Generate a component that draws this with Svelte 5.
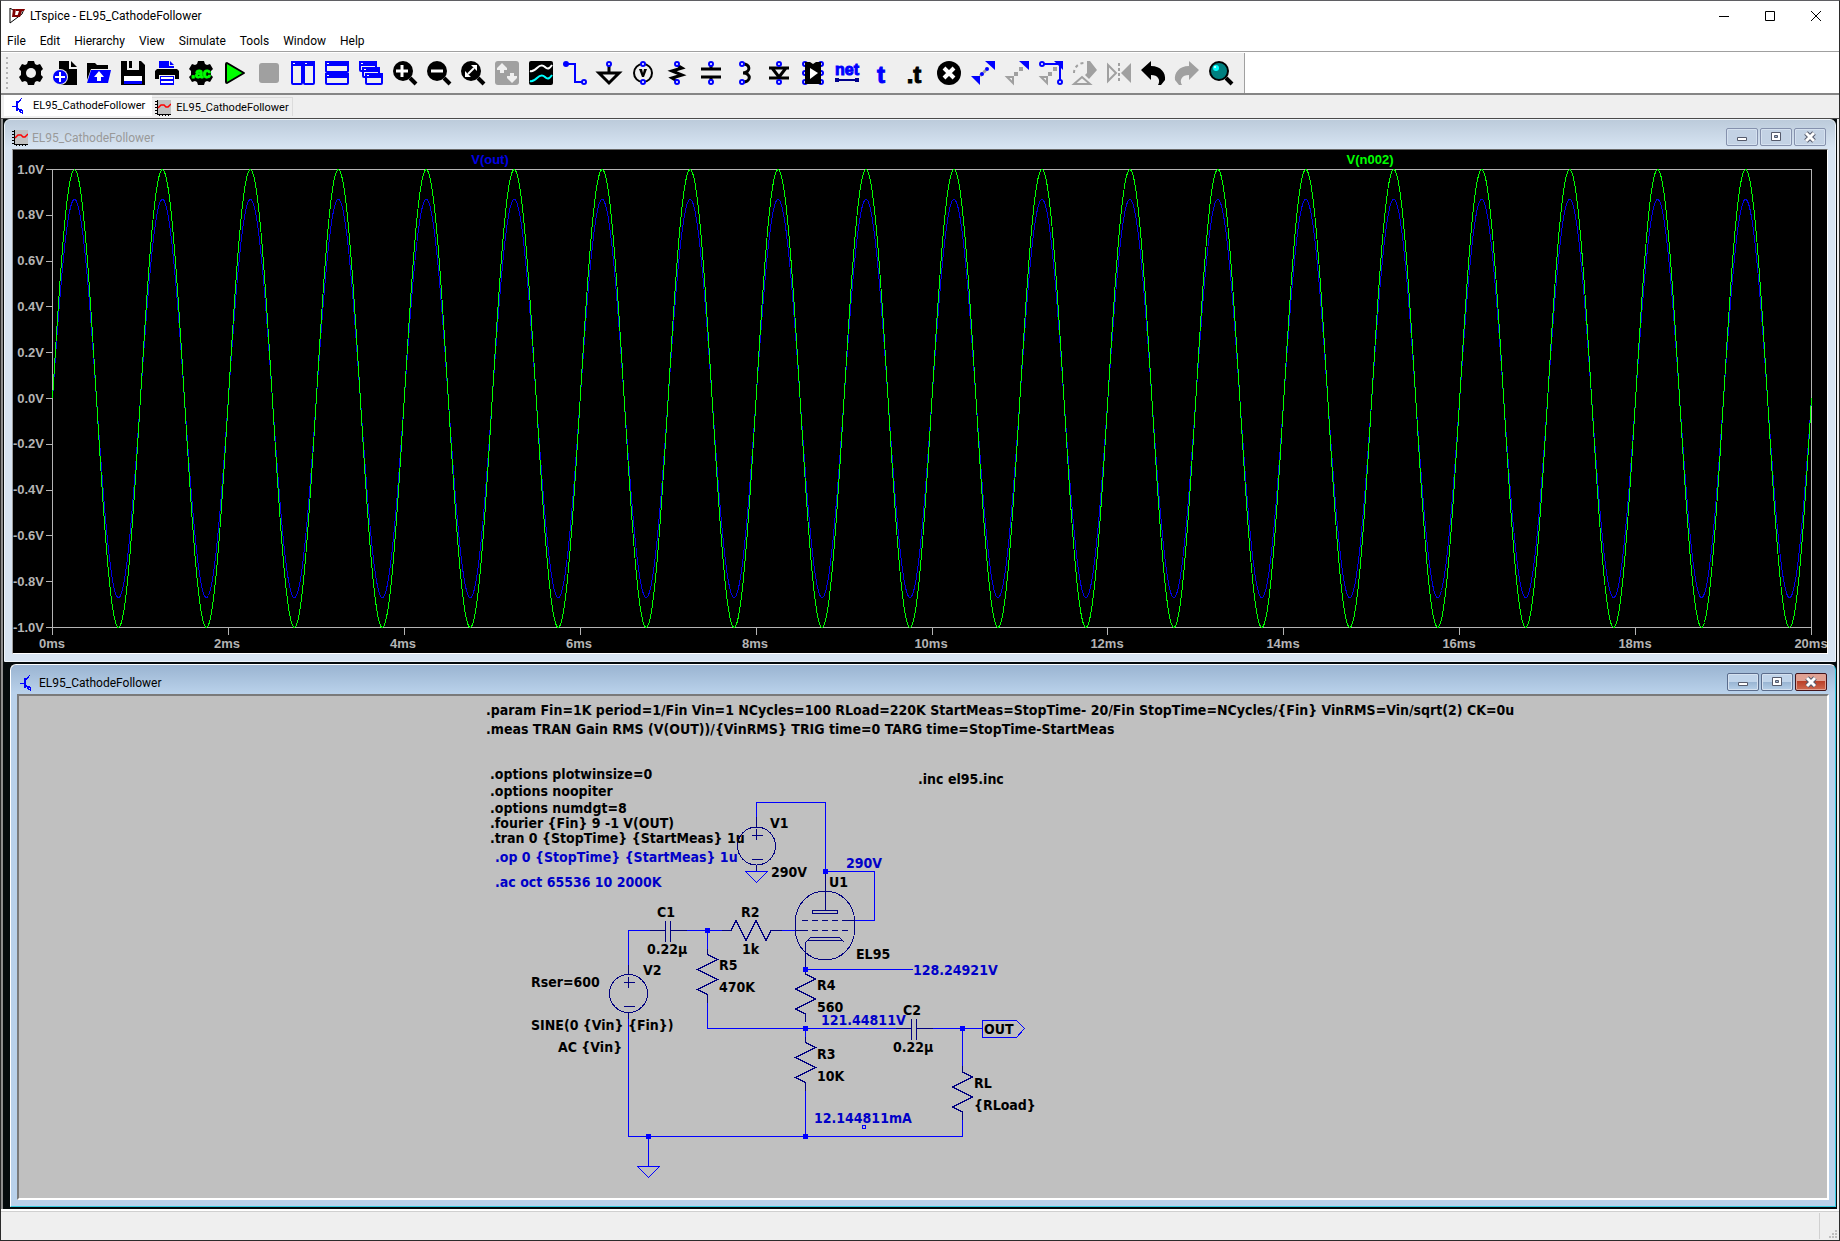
<script lang="ts">
	type Tool = { name: string; art: string }
	type Label = { x: number; y: number; text: string; blue?: boolean }

	const title = 'EL95_CathodeFollower'
	const menus = ['File', 'Edit', 'Hierarchy', 'View', 'Simulate', 'Tools', 'Window', 'Help']

	const gear =
		'<path d="M9 0h6l1 3 2 1 3-1 3 5-2 2v4l2 2-3 5-3-1-2 1-1 3H9l-1-3-2-1-3 1-3-5 2-2v-4L0 8l3-5 3 1 2-1z"/>'
	const lens =
		'<path d="M17 17l6 6" stroke="#000" stroke-width="4"/><circle cx="10" cy="10" r="10"/>'
	const pin = (x: number, y: number) =>
		`<circle cx="${x}" cy="${y}" r="2" fill="#fff" stroke="#00f" stroke-width="2"/>`
	const pane = (x: number, y: number, w: number, h: number) =>
		`<rect x="${x + 1}" y="${y + 1}" width="${w - 2}" height="${h - 2}" rx="1" fill="#efefef" stroke="#00f" stroke-width="2"/><path d="M${x} ${y}h${w}v5h-${w}z" fill="#00f"/><path d="M${x + 2} ${y + 2}h2v1h-2z" fill="#fff"/>`

	const tools: Tool[] = [
		{ name: 'Settings', art: gear + '<circle cx="12" cy="12" r="5" fill="#efefef"/>' },
		{
			name: 'New schematic',
			art: '<path d="M6 0h10v8h8v16H6z"/><path d="M18 0l6 6h-6z"/><circle cx="7" cy="16" r="8" fill="#efefef"/><circle cx="7" cy="16" r="7" fill="#00f"/><path d="M7 11v10M2 16h10" stroke="#fff" stroke-width="2"/>'
		},
		{
			name: 'Open',
			art: '<path d="M0 2h8l2 2h11v4H4L0 19z"/><path d="M4 9h20l-3 13H0z" fill="#00f"/><path d="M12 10l5 6h-3v4h-4v-4H7z" fill="#fff"/>'
		},
		{
			name: 'Save',
			art: '<path d="M0 0h20l4 4v20H0z"/><path d="M6 0h12v9H6z" fill="#efefef"/><path d="M8 0h3v7H8z"/><path d="M3 15h18v6H3z" fill="#fff"/><path d="M3 20h18v3H3z" fill="#00f"/>'
		},
		{
			name: 'Print',
			art: '<path d="M4 0h10v5h5v2H4z" fill="#00f"/><path d="M15 0l4 4h-4z" fill="#00f"/><path d="M2 8h20l2 2v8h-4v-4H4v4H0v-8z"/><path d="M5 15h14v9H5z" fill="#00f"/><path d="M6 17h12M6 21h12" stroke="#fff" stroke-width="2"/>'
		},
		{
			name: 'Configure analysis',
			art:
				gear +
				'<text x="12" y="17" text-anchor="middle" font-family="Liberation Sans, sans-serif" font-weight="700" font-size="14" fill="#0f0" stroke="#0f0">.ac</text>'
		},
		{
			name: 'Run',
			art: '<path d="M3 3v18q0 1 1 1L21 12 4 2q-1 0-1 1z" fill="#0f0" stroke="#000" stroke-width="2" stroke-linejoin="round"/>'
		},
		{ name: 'Stop', art: '<rect x="2" y="2" width="20" height="20" rx="3" fill="#a0a0a0"/>' },
		{ name: 'Tile vertically', art: pane(0, 0, 12, 24) + pane(12, 0, 12, 24) },
		{ name: 'Tile horizontally', art: pane(0, 0, 24, 12) + pane(0, 12, 24, 12) },
		{ name: 'Cascade', art: pane(0, 0, 18, 11) + pane(3, 6, 18, 11) + pane(6, 12, 18, 12) },
		{ name: 'Zoom in', art: lens + '<path d="M9 4v12M3 10h12" stroke="#fff" stroke-width="3"/>' },
		{ name: 'Zoom out', art: lens + '<path d="M4 10h12" stroke="#fff" stroke-width="3"/>' },
		{
			name: 'Zoom to fit',
			art: lens + '<path d="M7 13l6-6" stroke="#fff" stroke-width="2"/><path d="M10 4h6v6zM4 10l6 6H4z" fill="#fff"/>'
		},
		{
			name: 'Autorange',
			art: '<rect width="24" height="24" rx="3" fill="#a0a0a0"/><path d="M7 2l5 5v2H9v3H5V9H2V7zM17 22l-5-5v-2h3v-3h4v3h3v2z" fill="#efefef"/>'
		},
		{
			name: 'Waveforms',
			art: '<rect width="24" height="24" rx="2"/><path d="M1 10c3 1 5-1 7-3s5-4 8-1 5 1 7-2" fill="none" stroke="#fff" stroke-width="2"/><path d="M1 20c3 1 5-1 7-3s5-4 8-1 5 1 7-2" fill="none" stroke="#0ff" stroke-width="2"/>'
		},
		{
			name: 'Wire',
			art: '<path d="M3 3h9v18h8" fill="none" stroke="#00f" stroke-width="2"/><circle cx="3" cy="3" r="3" fill="#00f"/>' + pin(21, 21)
		},
		{
			name: 'Ground',
			art: '<path d="M12 4v8M2 12h20L12 22z" fill="none" stroke="#000" stroke-width="3"/>' + pin(12, 3)
		},
		{
			name: 'Voltage source',
			art: '<circle cx="12" cy="12" r="9" fill="none" stroke="#000" stroke-width="2"/><path d="M8 8h3l1 4 1-4h3l-3 8h-2z"/>' + pin(12, 3) + pin(12, 21)
		},
		{
			name: 'Resistor',
			art: '<path d="M12 4l5 3-10 3 10 4-10 3 5 3" fill="none" stroke="#000" stroke-width="3"/>' + pin(12, 3) + pin(12, 21)
		},
		{
			name: 'Capacitor',
			art: '<path d="M12 4v4M12 16v4M2 8h20M2 16h20" stroke="#000" stroke-width="3"/>' + pin(12, 3) + pin(12, 21)
		},
		{
			name: 'Inductor',
			art: '<path d="M9 3c9-1 9 9 1 9 9 0 8 10-1 9" fill="none" stroke="#000" stroke-width="3"/>' + pin(9, 3) + pin(9, 21)
		},
		{
			name: 'Diode',
			art: '<path d="M2 7h20M2 17h20M5 7l7 9 7-9" fill="none" stroke="#000" stroke-width="3"/>' + pin(12, 3) + pin(12, 21)
		},
		{
			name: 'Component',
			art:
				[3, 12, 21].map((y) => pin(4, y) + pin(20, y)).join('') +
				'<path d="M4 1h5l3 2 3-2h5v22H4z"/><path d="M9 7l8 5-8 6z" fill="#fff"/>'
		},
		{
			name: 'Net name',
			art: '<text x="12" y="14" text-anchor="middle" font-family="Liberation Sans, sans-serif" font-weight="700" font-size="16" fill="#00f" stroke="#00f">net</text><path d="M2 19h20" stroke="#00008c" stroke-width="2"/><path d="M0 17h4v4H0zM20 17h4v4h-4z" fill="#00008c"/>'
		},
		{
			name: 'Text',
			art: '<text x="12" y="22" text-anchor="middle" font-family="Liberation Sans, sans-serif" font-weight="700" font-size="24" fill="#00f" stroke="#00f">t</text>'
		},
		{
			name: 'SPICE directive',
			art: '<text x="11" y="22" text-anchor="middle" font-family="Liberation Sans, sans-serif" font-weight="700" font-size="24" stroke="#000">.t</text>'
		},
		{
			name: 'Delete',
			art: '<circle cx="12" cy="12" r="12"/><path d="M7 7l10 10M17 7L7 17" stroke="#fff" stroke-width="4"/>'
		},
		{
			name: 'Move',
			art: '<path d="M14 0h10v9zM0 15l9 9v-9z" fill="#00f"/><path d="M9 15l6-6" stroke="#a0a0a0" stroke-width="3" stroke-dasharray="3 2"/><circle cx="11" cy="13" r="2" fill="#00f"/><circle cx="16" cy="8" r="2" fill="#00f"/>'
		},
		{
			name: 'Duplicate',
			art: '<path d="M14 0h10v9z" fill="#00f"/><path d="M2 16h6v6z" fill="none" stroke="#a0a0a0" stroke-width="2"/><path d="M9 11h4v4H9zM14 6h4v4h-4z" fill="#a0a0a0"/>'
		},
		{
			name: 'Drag',
			art: '<path d="M2 16h6v6z" fill="none" stroke="#a0a0a0" stroke-width="2"/><path d="M9 11h4v4H9zM14 6h4v4h-4z" fill="#a0a0a0"/><path d="M3 3h18v18" fill="none" stroke="#00f" stroke-width="2"/><path d="M15 0h9v9z" fill="#00f"/>' + pin(3, 3) + pin(21, 21)
		},
		{
			name: 'Rotate',
			art: '<path d="M1 12a10 10 0 0 1 11-10" fill="none" stroke="#a0a0a0" stroke-width="2" stroke-dasharray="3 3"/><path d="M14 0h3l7 9-8 9-4-4 2-2z" fill="#a0a0a0"/><path d="M1 23l8-7 8 7z" fill="none" stroke="#a0a0a0" stroke-width="2"/>'
		},
		{
			name: 'Mirror',
			art: '<path d="M12 2v20" stroke="#a0a0a0" stroke-width="2" stroke-dasharray="3 2"/><path d="M1 4l8 8-8 8z" fill="none" stroke="#a0a0a0" stroke-width="2"/><path d="M24 2v20L14 12z" fill="#a0a0a0"/>'
		},
		{
			name: 'Undo',
			art: '<path d="M0 9L10 0v5c10 0 15 7 14 14l-4 5h-3c3-5 0-10-7-10v5z"/>'
		},
		{
			name: 'Redo',
			art: '<path d="M24 9L14 0v5C4 5-1 12 0 19l4 5h3c-3-5 0-10 7-10v5z" fill="#a0a0a0"/>'
		},
		{
			name: 'Search',
			art: '<path d="M17 17l6 6" stroke="#000" stroke-width="4"/><circle cx="10" cy="10" r="9" fill="#008080" stroke="#000" stroke-width="2"/><circle cx="7" cy="7" r="3" fill="#0ff"/><circle cx="6" cy="6" r="1" fill="#fff"/>'
		}
	]

	// plot area in pane coordinates
	const left = 52.5
	const top = 169.5
	const width = 1759
	const height = 458
	const cycles = 20

	const volts = [1, 0.8, 0.6, 0.4, 0.2, 0, -0.2, -0.4, -0.6, -0.8, -1]
	const times = [0, 2, 4, 6, 8, 10, 12, 14, 16, 18, 20]
	const yOf = (v: number) => top + (height / 2) * (1 - v)
	const xOf = (ms: number) => left + (width * ms) / 20

	function trace(amplitude: number) {
		const points: string[] = []
		for (let i = 0; i <= width; i++) {
			const v = amplitude * Math.sin((2 * Math.PI * cycles * i) / width)
			points.push(`${left + i},${yOf(v).toFixed(1)}`)
		}
		return points.join(' ')
	}

	const labels: Label[] = [
		{
			x: 486,
			y: 715,
			text: '.param Fin=1K period=1/Fin Vin=1 NCycles=100 RLoad=220K StartMeas=StopTime- 20/Fin StopTime=NCycles/{Fin} VinRMS=Vin/sqrt(2) CK=0u'
		},
		{ x: 486, y: 734, text: '.meas TRAN Gain RMS (V(OUT))/{VinRMS} TRIG time=0 TARG time=StopTime-StartMeas' },
		{ x: 490, y: 779, text: '.options plotwinsize=0' },
		{ x: 490, y: 796, text: '.options noopiter' },
		{ x: 490, y: 813, text: '.options numdgt=8' },
		{ x: 490, y: 828, text: '.fourier {Fin} 9 -1 V(OUT)' },
		{ x: 490, y: 843, text: '.tran 0 {StopTime} {StartMeas} 1u' },
		{ x: 495, y: 862, text: '.op 0 {StopTime} {StartMeas} 1u', blue: true },
		{ x: 495, y: 887, text: '.ac oct 65536 10 2000K', blue: true },
		{ x: 918, y: 784, text: '.inc el95.inc' },
		{ x: 770, y: 828, text: 'V1' },
		{ x: 771, y: 877, text: '290V' },
		{ x: 846, y: 868, text: '290V', blue: true },
		{ x: 829, y: 887, text: 'U1' },
		{ x: 657, y: 917, text: 'C1' },
		{ x: 741, y: 917, text: 'R2' },
		{ x: 647, y: 954, text: '0.22µ' },
		{ x: 742, y: 954, text: '1k' },
		{ x: 643, y: 975, text: 'V2' },
		{ x: 719, y: 970, text: 'R5' },
		{ x: 719, y: 992, text: '470K' },
		{ x: 856, y: 959, text: 'EL95' },
		{ x: 913, y: 975, text: '128.24921V', blue: true },
		{ x: 531, y: 987, text: 'Rser=600' },
		{ x: 817, y: 990, text: 'R4' },
		{ x: 817, y: 1012, text: '560' },
		{ x: 821, y: 1025, text: '121.44811V', blue: true },
		{ x: 903, y: 1015, text: 'C2' },
		{ x: 893, y: 1052, text: '0.22µ' },
		{ x: 984, y: 1034, text: 'OUT' },
		{ x: 531, y: 1030, text: 'SINE(0 {Vin} {Fin})' },
		{ x: 558, y: 1052, text: 'AC {Vin}' },
		{ x: 817, y: 1059, text: 'R3' },
		{ x: 817, y: 1081, text: '10K' },
		{ x: 974, y: 1088, text: 'RL' },
		{ x: 974, y: 1110, text: '{RLoad}' },
		{ x: 814, y: 1123, text: '12.144811mA', blue: true }
	]

	const wires = [
		'M756.5 826V802.5H825.5V872',
		'M825.5 871.5H874.5V920.5H855',
		'M756.5 871.5m-11 0h22l-11 11z',
		'M628.5 966V930.5H650M684 930.5H722M707.5 930.5V950M782 930.5H795',
		'M805.5 969.5H913M707.5 1002V1028.5H896M930 1028.5H982',
		'M962.5 1028.5V1066M962.5 1118V1136.5H628.5V1018',
		'M805.5 1028.5V1038M805.5 1088V1136.5M648.5 1136.5V1166',
		'M637.5 1166.5h22l-11 11z',
		'M982.5 1020.5H1016.5L1024.5 1028.5L1016.5 1037.5H982.5Z',
		'M862.5 1125.5h3v3h-3z'
	]
	const nodes = [
		[825, 871],
		[707, 930],
		[805, 969],
		[805, 1028],
		[962, 1028],
		[648, 1136],
		[805, 1136]
	]
	const resistors = [
		[707.5, 954.5],
		[805.5, 974],
		[805.5, 1042.5],
		[962.5, 1072]
	]
	const sources = [
		[756.5, 846],
		[628.5, 993.5]
	]
	const capacitors = [
		[667.5, 930.5],
		[913.5, 1028.5]
	]
</script>

{#snippet transistor()}
	<svg class="doc-icon" viewBox="0 0 16 16" shape-rendering="crispEdges" aria-hidden="true">
		<path d="M0 8h4M5 6l5-6M5 10l6 6" stroke="#00f" fill="none" />
		<path d="M4 3h2v10H4zM6 10l5 2-3 3zM9 13l2 3V13z" fill="#00f" />
	</svg>
{/snippet}

{#snippet graph()}
	<svg class="doc-icon" viewBox="0 0 16 16" aria-hidden="true">
		<path d="M2 0h14v14H2z" fill="#c0c0c0" />
		<path
			d="M2 0v14h14M0 1h2M0 4h2M0 7h2M0 10h2M0 13h2M4 14v2M7 14v2M10 14v2M13 14v2"
			stroke="#000"
			fill="none"
			shape-rendering="crispEdges"
		/>
		<path d="M3 8l3-3h3l2 2h2l3-3" stroke="#f00" stroke-width="1.5" fill="none" />
	</svg>
{/snippet}

{#snippet windowButtons()}
	<div class="controls">
		<button aria-label="Minimize">
			<svg viewBox="0 0 16 12"><path d="M3.5 6.500h9v3h-9z" fill="#fff" stroke="#555a6b" /></svg>
		</button>
		<button aria-label="Maximize">
			<svg viewBox="0 0 16 12">
				<path d="M3.500 1.500h9v8h-9z" fill="#fff" stroke="#555a6b" />
				<path d="M6.500 4.500h3v2h-3z" fill="#9fb4cf" stroke="#555a6b" />
			</svg>
		</button>
		<button class="close" aria-label="Close">
			<svg viewBox="0 0 16 12">
				<path d="M4 2l8 8M12 2l-8 8" stroke="#555a6b" stroke-width="5" />
				<path d="M4 2l8 8M12 2l-8 8" stroke="#fff" stroke-width="3" />
			</svg>
		</button>
	</div>
{/snippet}

<div class="app">
	<header class="titlebar">
		<svg class="logo" viewBox="0 0 16 16" aria-hidden="true">
			<path d="M4 2L1 0v15l12-9 2-5" fill="none" stroke="#000" />
			<path d="M4 1h3L6 7h3l-1 2H3zM7 1h9l-1 2h-2l-2 6H8l2-6H7z" fill="#800000" />
		</svg>
		<h1>LTspice - {title}</h1>
		<div class="caption">
			<button aria-label="Minimize"><svg viewBox="0 0 10 10"><path d="M0 5.5h10" /></svg></button>
			<button aria-label="Maximize"><svg viewBox="0 0 10 10"><path d="M.5.5h9v9h-9z" /></svg></button>
			<button aria-label="Close"><svg viewBox="0 0 10 10"><path d="M0 0l10 10M10 0L0 10" /></svg></button>
		</div>
	</header>

	<nav class="menu">
		{#each menus as menu}
			<button>{menu}</button>
		{/each}
	</nav>

	<div class="toolrow">
		<div class="toolbar" role="toolbar" aria-label="Main toolbar">
			<span class="grip"></span>
			{#each tools as tool}
				<button aria-label={tool.name}>
					<svg viewBox="0 0 24 24">{@html tool.art}</svg>
				</button>
			{/each}
		</div>
	</div>

	<div class="tabs" role="tablist">
		<button class="tab active" role="tab" aria-selected="true">{@render transistor()}{title}</button>
		<button class="tab" role="tab" aria-selected="false">{@render graph()}{title}</button>
	</div>

	<main class="mdi">
		<section class="window">
			<header>
				{@render graph()}
				<h2>{title}</h2>
				{@render windowButtons()}
			</header>
			<svg class="plot" viewBox="13 150 1814 503" role="img" aria-label="Transient waveforms">
				<g class="axis">
					<rect x={left} y={top} {width} {height} />
					{#each volts as v}
						<path d="M{left} {yOf(v)}h-7" />
					{/each}
					{#each times as t}
						<path d="M{xOf(t)} {top + height}v7" />
					{/each}
				</g>
				{#each volts as v}
					<text x="44" y={Math.round(yOf(v)) + 4} text-anchor="end">{v.toFixed(1)}V</text>
				{/each}
				{#each times as t}
					<text x={Math.round(xOf(t)) - 1} y="648" text-anchor="middle">{t}ms</text>
				{/each}
				<text class="out" x="490" y="164" text-anchor="middle">V(out)</text>
				<text class="in" x="1370" y="164" text-anchor="middle">V(n002)</text>
				<polyline class="out" points={trace(0.87)} />
				<polyline class="in" points={trace(1)} />
			</svg>
		</section>

		<section class="window active">
			<header>
				{@render transistor()}
				<h2>{title}</h2>
				{@render windowButtons()}
			</header>
			<svg class="schematic" viewBox="19 696 1808 502" role="img" aria-label="Schematic">
				<g class="wire">
					{#each wires as d}
						<path {d} />
					{/each}
				</g>
				<g class="part">
					{#each sources as [x, y]}
						<circle cx={x} cy={y} r="19" />
						<path d="M{x - 5} {y - 11}h11M{x} {y - 17}v11M{x - 5} {y + 13}h11M{x} {y + 19}v6M{x} {y - 19}v-10" />
					{/each}
					{#each capacitors as [x, y]}
						<path d="M{x - 2} {y - 10}v21M{x + 3} {y - 10}v21M{x - 18} {y}h16M{x + 3} {y}h16" />
					{/each}
					{#each resistors as [x, y]}
						<path d="M{x} {y - 6}v6l10 5l-20 10l20 10l-20 10l10 5v8" />
					{/each}
					<path d="M722 930.5h9l5-10l10 20l10-20l10 20l5-10h11" />
					<!-- tube envelope, anode, grids, cathode -->
					<path d="M795.5 921a29.5 30 0 0 1 59 0v9a29.5 30 0 0 1-59 0z" />
					<path d="M825.5 874V910M812.5 910.5h25v3h-25z" />
					<path d="M802 920.5h6m4 0h6m4 0h6m4 0h6m4 0h13" />
					<path d="M795 930.5h13m4 0h6m4 0h6m4 0h6m4 0h6" />
					<path d="M805.5 969V942.5l5-5h29l5 5M808 940.5h35" />
				</g>
				{#each nodes as [x, y]}
					<rect class="node" x={x - 2} y={y - 2} width="5" height="5" />
				{/each}
				{#each labels as label}
					<text x={label.x} y={label.y} class:blue={label.blue}>{label.text}</text>
				{/each}
			</svg>
		</section>
	</main>

	<footer class="status">
		<span class="cell"></span>
		<svg class="sizer" viewBox="0 0 8 8" aria-hidden="true">
			<path d="M6 0h2v2H6zM3 3h2v2H3zM6 3h2v2H6zM0 6h2v2H0zM3 6h2v2H3zM6 6h2v2H6z" fill="#bfbfbf" />
		</svg>
	</footer>
</div>

<style>
	:global(body) {
		background: #efefef;
	}
	.app {
		box-sizing: border-box;
		min-height: 100vh;
		display: flex;
		flex-direction: column;
		border: 1px solid #2b2b2b;
		border-top-color: #5f5f63;
		background: #efefef;
		font-family: Roboto, 'Liberation Sans', sans-serif;
		font-size: 12px;
		line-height: 16px;
		color: #000;
	}
	button {
		margin: 0;
		padding: 0;
		border: 0;
		background: none;
		font: inherit;
		color: inherit;
	}
	svg {
		display: block;
	}
	h1,
	h2 {
		margin: 0;
		font-size: 12px;
		font-weight: 400;
	}

	.titlebar {
		display: flex;
		align-items: center;
		height: 30px;
		padding-left: 8px;
		background: #fff;
	}
	.logo {
		width: 16px;
		height: 16px;
		margin-right: 5px;
	}
	.caption {
		display: flex;
		margin-left: auto;
	}
	.caption button {
		width: 46px;
		height: 30px;
		display: grid;
		place-items: center;
	}
	.caption svg {
		width: 10px;
		height: 10px;
		fill: none;
		stroke: #000;
	}

	.menu {
		display: flex;
		gap: 14px;
		height: 20px;
		padding-left: 6px;
		background: #fff;
	}

	.toolrow {
		border-top: 1px solid #a0a0a0;
		border-bottom: 2px solid #858585;
		background: #fff;
	}
	.toolbar {
		display: flex;
		align-items: center;
		gap: 10px;
		width: max-content;
		height: 40px;
		margin-top: 1px;
		padding-right: 11px;
		border-right: 1px solid #a0a0a0;
		background: #efefef;
	}
	.toolbar button,
	.toolbar svg {
		width: 24px;
		height: 24px;
		overflow: visible;
	}
	.grip {
		width: 2px;
		height: 32px;
		margin: 0 1px 0 5px;
		background: repeating-linear-gradient(#b4b4b4 0 2px, transparent 2px 5px);
	}

	.tabs {
		display: flex;
		align-items: flex-end;
		height: 21px;
		padding: 0 0 2px 3px;
		border-bottom: 1px solid #4a4a4a;
	}
	.tab {
		box-sizing: border-box;
		display: flex;
		align-items: center;
		gap: 5px;
		height: 19px;
		padding: 1px 3px 0;
		border: 1px solid #dcdcdc;
		border-width: 1px 1px 0 0;
		font-size: 11px;
	}
	.tab.active {
		height: 21px;
		padding: 0 6px 0 8px;
		border-color: #fff;
		background: #fff;
	}
	.doc-icon {
		flex: none;
		width: 16px;
		height: 16px;
	}

	.mdi {
		flex: 1;
		display: flex;
		flex-direction: column;
		gap: 2px;
		margin-right: 2px;
		padding: 0 1px 2px;
		border-left: 2px solid #8e8e8e;
		background: #040a0c;
	}
	.window {
		padding: 0 7px 7px;
		border: 1px solid #eef4fa;
		border-radius: 6px 6px 0 0;
		background: linear-gradient(#bccbdb, #d7e4f2 28px);
		color: #999;
	}
	.window.active {
		margin-left: 6px;
		padding: 0 6px 6px;
		border-color: #fff #35cbe0 #35cbe0 #fff;
		background: linear-gradient(#9ab4d1, #b9d1ea 28px);
		color: #000;
	}
	.window header {
		display: flex;
		align-items: center;
		gap: 4px;
		height: 29px;
	}
	.window.active header {
		padding-left: 3px;
		gap: 3px;
	}
	.window h2 {
		padding-top: 6px;
	}
	.window .doc-icon {
		margin-top: 6px;
	}
	.controls {
		display: flex;
		gap: 2px;
		margin: 0 2px 0 auto;
	}
	.controls button {
		box-sizing: border-box;
		display: grid;
		place-items: center;
		width: 32px;
		height: 18px;
		margin-top: 5px;
		border: 1px solid #8591ad;
		border-radius: 2px;
		box-shadow: inset 0 0 0 1px #d5e1ef;
		background: #c3d2e4;
	}
	.active .controls button {
		border-color: #5a6c8c;
		background: linear-gradient(#c0d4ea 50%, #98b4d2 50%, #b6cfe8);
	}
	.active .controls .close {
		border-color: #43141a;
		box-shadow: inset 0 0 0 1px #e0a092;
		background: linear-gradient(#e0a294 45%, #b93f27 45%, #cf6a50);
	}
	.controls svg {
		width: 16px;
		height: 12px;
	}

	.plot,
	.schematic {
		box-sizing: content-box;
		width: calc(100% - 2px);
		height: auto;
		border: 1px solid #fff;
		border-top-color: #696969;
		border-left-color: #a0a0a0;
		background: #000;
		overflow: hidden;
	}
	.plot text {
		font-family: 'Liberation Sans', Arial, sans-serif;
		font-size: 13px;
		font-weight: 700;
		fill: #b4b4b4;
	}
	.plot .axis {
		fill: none;
		stroke: #b4b4b4;
		shape-rendering: crispEdges;
	}
	.plot polyline {
		fill: none;
		shape-rendering: crispEdges;
	}
	.plot polyline.out {
		stroke: #0000e6;
	}
	.plot polyline.in {
		stroke: #0f0;
	}
	.plot text.out {
		fill: #0000e6;
	}
	.plot text.in {
		fill: #0f0;
	}

	.schematic {
		width: calc(100% - 4px);
		border: 2px solid #fff;
		border-top-color: #7a7a7a;
		border-left-color: #7a7a7a;
		background: #c0c0c0;
	}
	.schematic text {
		font-family: 'DejaVu Sans Condensed', 'DejaVu Sans', sans-serif;
		font-size: 14px;
		font-weight: 700;
		fill: #000;
	}
	.schematic text.blue {
		fill: #0000c8;
	}
	.wire,
	.part {
		fill: none;
		shape-rendering: crispEdges;
	}
	.wire {
		stroke: #00f;
	}
	.part {
		stroke: #000080;
	}
	.node {
		fill: #00f;
	}

	.status {
		display: flex;
		justify-content: flex-end;
		align-items: flex-end;
		height: 28px;
		border-top: 1px solid #d0d0d0;
		box-shadow: 0 -2px #fff;
		margin-top: 2px;
	}
	.cell {
		width: 1px;
		height: 26px;
		margin: 0 9px 1px 0;
		background: #d0d0d0;
	}
	.sizer {
		width: 8px;
		height: 8px;
		margin: 0 2px 2px 0;
	}
</style>
